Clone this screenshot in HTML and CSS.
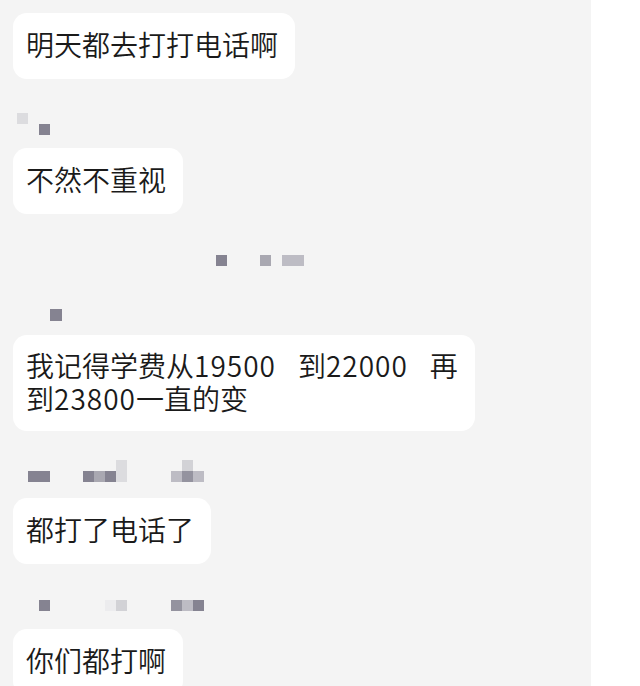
FILE: index.html
```html
<!DOCTYPE html>
<html lang="zh-CN">
<head>
    <meta charset="UTF-8">
    <meta name="viewport" content="width=device-width, initial-scale=1.0">
    <title>聊天记录</title>
    <link rel="stylesheet" href="styles.css">
</head>
<body>

    <div class="chat">
        <div class="msg msg-1">明天都去打打电话啊</div>

        <!-- 打码的昵称 -->
        <div class="mosaic mosaic-a">
            <div class="cells"><span class="c1"></span></div>
            <div class="cells"><span></span><span></span><span class="c4"></span></div>
        </div>

        <div class="msg msg-2">不然不重视</div>

        <div class="mosaic mosaic-b">
            <div class="cells">
                <span class="c4"></span><span></span><span></span><span></span>
                <span class="c3"></span><span></span><span class="c2"></span><span class="c2"></span>
            </div>
        </div>

        <div class="mosaic mosaic-c">
            <div class="cells"><span class="c4 big"></span></div>
        </div>

        <div class="msg msg-3">我记得学费从<span class="num">19500</span><span class="gap"> </span>到<span class="num">22000</span><span class="gap"> </span>再<br>到<span class="num">23800</span>一直的变</div>
        <div class="ghost ghost-3"></div>

        <div class="mosaic mosaic-d">
            <div class="cells">
                <span></span><span></span><span></span><span></span><span></span><span></span><span></span><span></span>
                <span class="c1"></span><span></span><span></span><span></span><span></span><span></span>
                <span class="c1b"></span>
            </div>
            <div class="cells">
                <span class="c4"></span><span class="c4"></span><span></span><span></span><span></span>
                <span class="c4"></span><span class="c3"></span><span class="c4"></span><span class="c1"></span>
                <span></span><span></span><span></span><span></span>
                <span class="c2"></span><span class="c3b"></span><span class="c2"></span>
            </div>
        </div>

        <div class="msg msg-4">都打了电话了</div>
        <div class="ghost ghost-4"></div>

        <div class="mosaic mosaic-e">
            <div class="cells">
                <span class="c4"></span><span></span><span></span><span></span><span></span><span></span>
                <span class="c0"></span><span class="c1b"></span><span></span><span></span><span></span><span></span>
                <span class="c3b"></span><span class="c2"></span><span class="c4"></span>
            </div>
        </div>

        <div class="msg msg-5">你们都打啊</div>
    </div>

</body>
</html>
```

FILE: styles.css
```css
/* Estilos globales */
body {
    margin: 0;
    background-color: #ffffff;
    font-family: "Noto Sans CJK SC", "Noto Sans", sans-serif;
    color: #1a1a1a;
    overflow: hidden;
}

.chat {
    width: 591px;
    height: 686px;
    box-sizing: border-box;
    padding: 13px 0 0 13px;
    background-color: #f4f4f4;
    display: flex;
    flex-direction: column;
    align-items: flex-start;
    overflow: hidden;
}

/* Burbujas */
.msg {
    background-color: #ffffff;
    border-radius: 14px;
    padding: 15px 17px 18px 13px;
    font-size: 28px;
    font-weight: 350;
    line-height: 33px;
    white-space: nowrap;
}

.msg .num {
    letter-spacing: 1px;
}

.msg .gap {
    display: inline-block;
    width: 22px;
}

.msg-2 { margin-top: 13px; }

.msg-3 {
    margin-top: 15px;
    padding-top: 14px;
    padding-bottom: 16px;
}

.msg-4 { margin-top: 16px; }
.msg-5 { margin-top: 18px; }

/* Restos blancos bajo algunas burbujas */
.ghost {
    height: 3px;
    background-color: #fbfbfb;
    border-radius: 2px;
}

.ghost-3 {
    width: 192px;
    margin: 7px 0 0 15px;
}

.ghost-4 {
    width: 198px;
    margin: 4px 0 0 4px;
}

/* Nombres pixelados */
.mosaic {
    display: flex;
    flex-direction: column;
}

.cells {
    display: flex;
    height: 11px;
}

.cells span {
    width: 11px;
    height: 11px;
    flex: none;
}

.cells .big {
    width: 12px;
    height: 12px;
}

.c0 { background-color: #ececee; }
.c1 { background-color: #dcdcdf; }
.c1b { background-color: #d2d2d6; }
.c2 { background-color: #bdbcc4; }
.c3 { background-color: #a9a8b1; }
.c3b { background-color: #94939f; }
.c4 { background-color: #858391; }

.mosaic-a {
    margin: 34px 0 0 4px;
}

.mosaic-b {
    margin: 41px 0 0 203px;
}

.mosaic-c {
    margin: 43px 0 0 37px;
    height: 12px;
}

.mosaic-d {
    margin: 22px 0 0 15px;
}

.mosaic-e {
    margin: 32px 0 0 26px;
}
```
